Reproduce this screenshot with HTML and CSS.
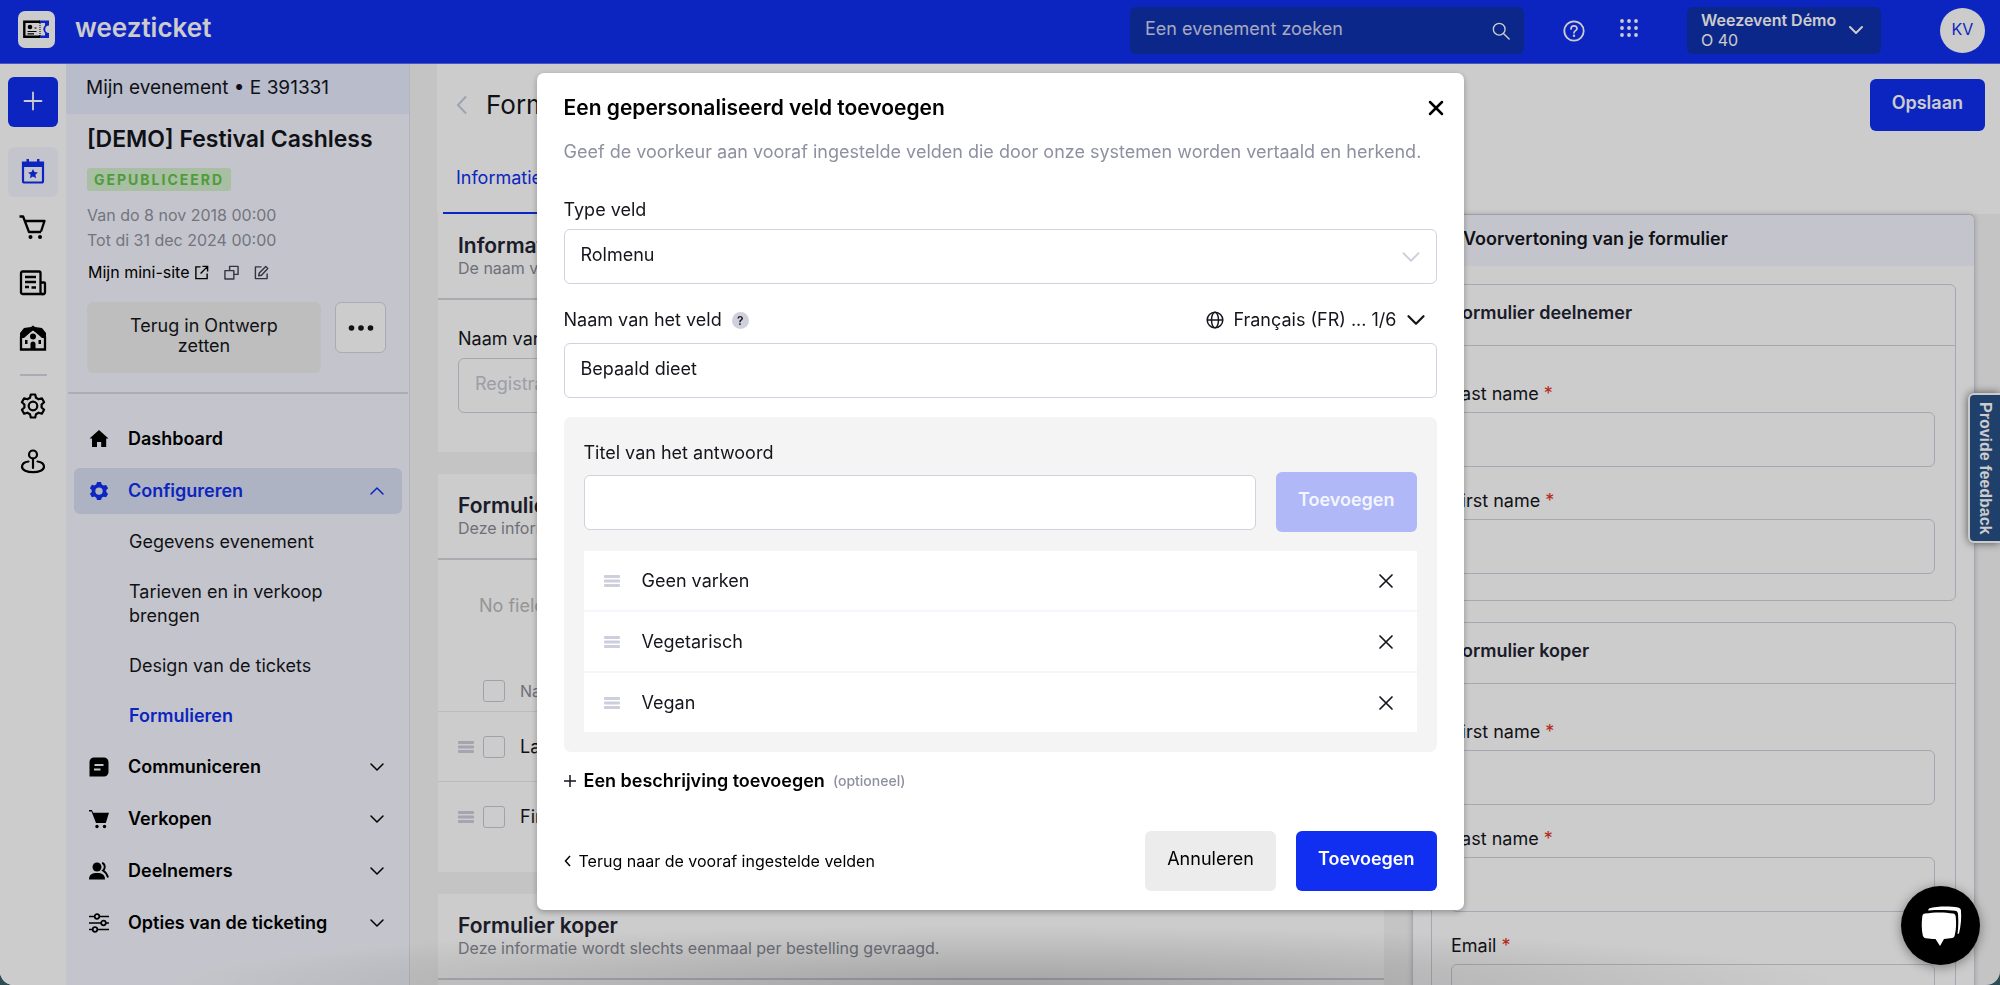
FILE: index.html
```html
<!DOCTYPE html>
<html lang="nl">
<head>
<meta charset="utf-8">
<title>Weezticket – Formulieren</title>
<link rel="stylesheet" href="styles.css">
</head>
<body>
<svg class="sprite" aria-hidden="true">
  <symbol id="i-chevron" viewBox="0 0 16 16"><path d="M2 5l6 6 6-6" fill="none" stroke="currentColor" stroke-linecap="round" stroke-linejoin="round"/></symbol>
  <symbol id="i-drag" viewBox="0 0 16 12"><path d="M1 1.500h14M1 6h14M1 10.500h14" stroke="currentColor" stroke-width="2.800" stroke-linecap="round"/></symbol>
  <symbol id="i-cross" viewBox="0 0 16 16"><path d="M2 2l12 12M14 2L2 14" stroke="currentColor" stroke-linecap="round"/></symbol>
</svg>

<div class="app">
  <header class="topbar">
    <a class="brand" href="#">
      <svg class="brand-mark" viewBox="0 0 37 37"><rect width="37" height="37" rx="7" fill="#fff"/><path d="M21 9.500h10v5a3.600 3.600 0 0 0 0 7.500v5H21z" fill="#112ff0"/><path d="M21 12h6v2.500a5 5 0 0 0 0 7.500v2.500h-6z" fill="#fff"/><path d="M22 10.700H6.300v15.100H22" fill="none" stroke="#000" stroke-width="2.400"/><path d="M22 12v13" stroke="#000" stroke-dasharray="1 1"/><circle cx="12" cy="16" r="2.300"/><path d="M9.500 20.500h9M9.500 22.800h6.500M16.500 17h2" stroke="#000" stroke-width="1.200"/></svg>
      <span class="brand-name">weezticket</span>
    </a>
    <label class="search">
      <input type="search" placeholder="Een evenement zoeken" aria-label="Een evenement zoeken">
      <svg class="search-icon" viewBox="0 0 20 20"><circle cx="8" cy="8" r="6.500" fill="none" stroke="currentColor" stroke-width="1.500"/><path d="M13 13l6 6" stroke="currentColor" stroke-width="1.600" stroke-linecap="round"/></svg>
    </label>
    <button class="bare help" aria-label="Help"><svg viewBox="0 0 22 22"><circle cx="11" cy="11" r="9.700" fill="none" stroke="currentColor" stroke-width="1.800"/><path d="M8 9c0-4 6-4 6-.5 0 2-3 2.300-3 4.300" fill="none" stroke="currentColor" stroke-width="1.700" stroke-linecap="round"/><circle cx="11" cy="15.800" r="1.200" fill="currentColor"/></svg></button>
    <button class="bare apps" aria-label="Apps"><svg viewBox="0 0 18 18" fill="currentColor"><circle cx="2" cy="2" r="1.900"/><circle cx="9" cy="2" r="1.900"/><circle cx="16" cy="2" r="1.900"/><circle cx="2" cy="9" r="1.900"/><circle cx="9" cy="9" r="1.900"/><circle cx="16" cy="9" r="1.900"/><circle cx="2" cy="16" r="1.900"/><circle cx="9" cy="16" r="1.900"/><circle cx="16" cy="16" r="1.900"/></svg></button>
    <button class="org"><span class="org-text"><b>Weezevent Démo</b><span>O 40</span></span><svg class="chev"><use href="#i-chevron"/></svg></button>
    <button class="avatar">KV</button>
  </header>

  <div class="body">
    <nav class="rail" aria-label="Hoofdmenu">
      <a class="rail-item rail-add" href="#" aria-label="Toevoegen"><svg viewBox="0 0 28 28"><path d="M14 5.500v17M5.500 14h17" stroke="currentColor" stroke-width="1.800" stroke-linecap="round"/></svg></a>
      <a class="rail-item rail-current" href="#" aria-label="Evenementen"><svg viewBox="0 0 28 28"><path d="M4 5.500h20V24a1.500 1.500 0 0 1-1.500 1.500h-17A1.500 1.500 0 0 1 4 24z" fill="none" stroke="currentColor" stroke-width="2.200"/><path d="M4 5h20v5H4zM7.500 2h2.500v4H7.500zM18 2h2.500v4H18z" fill="currentColor"/><path d="M14 12l1.500 3.100 3.400.4-2.500 2.300.7 3.400-3.100-1.700-3.100 1.700.7-3.400-2.500-2.300 3.400-.4z" fill="currentColor"/></svg></a>
      <a class="rail-item" href="#" aria-label="Verkoop"><svg viewBox="0 0 28 28" fill="none" stroke="currentColor" stroke-width="2.300"><path d="M.5 3.500h3.600L10 19h12M6 8h19.500L22 18.500" stroke-linejoin="round"/><circle cx="11.500" cy="24" r="2" fill="currentColor" stroke="none"/><circle cx="21" cy="24" r="2" fill="currentColor" stroke="none"/></svg></a>
      <a class="rail-item" href="#" aria-label="Nieuws"><svg viewBox="0 0 28 28" fill="none" stroke="currentColor" stroke-width="2.300"><path d="M24 25H3.500a1.500 1.500 0 0 1-1.500-1.500V4a1.500 1.500 0 0 1 1.500-1.500H20A1.500 1.500 0 0 1 21.500 4v19M21.500 13.500H25a1 1 0 0 1 1 1V23a2 2 0 0 1-4.500 0"/><path d="M6 8h11M6 13h11M6 18h4M12.500 18.500h4.500" stroke-width="2.500"/></svg></a>
      <a class="rail-item" href="#" aria-label="Locatie"><svg viewBox="0 0 28 28"><path d="M2 12v12.500h24V12L14 4z" fill="none" stroke="currentColor" stroke-width="2.300"/><path d="M1 13V8l4-5 7-1 2-1.500L16 2l7 1 4 5v5h-4l-9-8-9 8z" fill="currentColor"/><circle cx="14" cy="11.500" r="3" fill="currentColor"/><path d="M11.500 25v-6a2.500 2.500 0 0 1 5 0v6zM6 15h2.500v4H6zM19.500 15H22v4h-2.500z" fill="currentColor"/></svg></a>
      <hr class="rail-line">
      <a class="rail-item" href="#" aria-label="Instellingen"><svg viewBox="0 0 28 28" fill="none" stroke="currentColor" stroke-width="2.200" stroke-linejoin="round"><path d="M11.800 2.500h4.400l.8 3.300 2.600 1.500 3.300-1 2.200 3.900-2.500 2.300v3l2.500 2.300-2.200 3.900-3.300-1-2.600 1.500-.8 3.300h-4.400l-.8-3.300-2.600-1.500-3.300 1-2.200-3.900 2.500-2.300v-3l-2.500-2.300 2.200-3.900 3.300 1L11 5.800z"/><circle cx="14" cy="14" r="4.300"/></svg></a>
      <a class="rail-item" href="#" aria-label="Toegang"><svg viewBox="0 0 28 28" fill="none" stroke="currentColor" stroke-width="2.200"><circle cx="14" cy="6.500" r="4"/><path d="M14 10.500V20" stroke-linecap="round"/><path d="M9.500 13.500C5.500 14 3 16 3 18.800c0 3.200 5 5.400 11 5.400s11-2.200 11-5.400c0-2.800-2.500-4.800-6.500-5.300" stroke-linecap="round"/></svg></a>
    </nav>

    <aside class="sidebar">
      <p class="event-ref">Mijn evenement • E 391331</p>
      <section class="event">
        <h2>[DEMO] Festival Cashless</h2>
        <span class="badge">GEPUBLICEERD</span>
        <p class="dates">Van do 8 nov 2018 00:00<br>Tot di 31 dec 2024 00:00</p>
        <div class="minisite">
          <a href="#">Mijn mini-site <svg viewBox="0 0 16 16" fill="none" stroke="currentColor" stroke-width="1.500"><path d="M7 2H2v12.500h12V9M9 1.500h5.500V7M14 2L7 9"/></svg></a>
          <button class="bare" aria-label="Kopiëren"><svg viewBox="0 0 16 16" fill="none" stroke="currentColor" stroke-width="1.500" stroke-linejoin="round"><path d="M6 6V1.500h9V10h-4.500M1 6h9.500v9H1z"/></svg></button>
          <button class="bare" aria-label="Bewerken"><svg viewBox="0 0 16 16" fill="none" stroke="currentColor" stroke-width="1.500" stroke-linejoin="round"><path d="M8 2H1.500v12.500H14V9M5 11.500l.6-3L12.500 1.500l2.200 2.200L8 11z"/></svg></button>
        </div>
        <div class="event-actions">
          <button class="btn-draft">Terug in Ontwerp zetten</button>
          <button class="btn-more" aria-label="Meer"><svg viewBox="0 0 26 6" fill="currentColor"><circle cx="3.500" cy="3" r="2.800"/><circle cx="13" cy="3" r="2.800"/><circle cx="22.500" cy="3" r="2.800"/></svg></button>
        </div>
      </section>
      <ul class="menu">
        <li><a class="menu-item" href="#"><svg class="menu-icon" viewBox="0 0 20 20"><path d="M10 1l9.500 8.500h-2.300V18h-5v-5H8v5H3V9.500H.5z" fill="currentColor"/></svg><span>Dashboard</span></a></li>
        <li><button class="menu-item is-open"><svg class="menu-icon" viewBox="0 0 20 20"><path d="M8 1h4l.7 2.400 1.900 1.100 2.500-.6 2 3.400-1.800 1.800v2l1.800 1.800-2 3.400-2.500-.6-1.900 1.100L12 19H8l-.7-2.300-1.900-1.100-2.500.6-2-3.400 1.800-1.800V9L.9 7.200l2-3.400 2.500.6 1.900-1.100zM10 6.400a3.700 3.700 0 1 0 0 7.400 3.700 3.700 0 0 0 0-7.400z" fill="currentColor" fill-rule="evenodd"/></svg><span>Configureren</span><svg class="chev flip"><use href="#i-chevron"/></svg></button>
          <ul class="submenu">
            <li><a href="#">Gegevens evenement</a></li>
            <li><a href="#">Tarieven en in verkoop brengen</a></li>
            <li><a href="#">Design van de tickets</a></li>
            <li><a class="current" href="#">Formulieren</a></li>
          </ul></li>
        <li><button class="menu-item"><svg class="menu-icon" viewBox="0 0 20 20"><path d="M5 .500h10A4.500 4.500 0 0 1 19.500 5v10a4.500 4.500 0 0 1-4.500 4.500H.5V5A4.500 4.500 0 0 1 5 .500zM5.500 7v2h9V7zM5 11.500v2h6.500v-2z" fill="currentColor" fill-rule="evenodd"/></svg><span>Communiceren</span><svg class="chev"><use href="#i-chevron"/></svg></button></li>
        <li><button class="menu-item"><svg class="menu-icon" viewBox="0 0 20 20"><path d="M0 1h2.800l1.400 2.800H20L16.800 14H7L2.500 2.500H0z" fill="currentColor"/><circle cx="8" cy="17.500" r="1.700"/><circle cx="15.500" cy="17.500" r="1.700"/></svg><span>Verkopen</span><svg class="chev"><use href="#i-chevron"/></svg></button></li>
        <li><button class="menu-item"><svg class="menu-icon" viewBox="0 0 20 20"><circle cx="8" cy="6" r="4.500" fill="currentColor"/><path d="M0 18.500c0-5 3-6.500 8-6.500s8 1.500 8 6.500z" fill="currentColor"/><path d="M13 2c3 .5 3.800 5.500 1 7.500 2.500 1.500 4 3.500 5 7" fill="none" stroke="currentColor" stroke-width="1.900"/></svg><span>Deelnemers</span><svg class="chev"><use href="#i-chevron"/></svg></button></li>
        <li><button class="menu-item"><svg class="menu-icon" viewBox="0 0 20 20" fill="none" stroke="currentColor" stroke-width="1.700"><path d="M0 3.500h5.500M10.500 3.500H20M0 10h12M17 10h3M0 16.500h3.500M8.500 16.500H20"/><circle cx="8" cy="3.500" r="2.300"/><circle cx="14.500" cy="10" r="2.300"/><circle cx="6" cy="16.500" r="2.300"/></svg><span>Opties van de ticketing</span><svg class="chev"><use href="#i-chevron"/></svg></button></li>
      </ul>
    </aside>

    <main class="main">
      <div class="page-head">
        <div class="page-title">
          <a class="back" href="#" aria-label="Terug"><svg viewBox="0 0 12 20"><path d="M10 1.500L2 10l8 8.500" fill="none" stroke="currentColor" stroke-width="2"/></svg></a>
          <h1>Formulieren</h1>
          <button class="btn btn-primary btn-save">Opslaan</button>
        </div>
        <div class="tabs"><a href="#">Informatie</a></div>
      </div>
      <div class="columns">
        <div class="cards">
          <section class="card">
            <header><h3>Informatie</h3><p>De naam van je formulier.</p></header>
            <div class="card-form">
              <label for="form-name">Naam van het formulier</label>
              <input id="form-name" type="text" placeholder="Registratie">
            </div>
          </section>
          <section class="card">
            <header><h3>Formulier deelnemer</h3><p>Deze informatie wordt per deelnemer gevraagd.</p></header>
            <p class="empty">No fields</p>
            <div class="field-row field-head"><span></span><input type="checkbox" id="c-all"><label for="c-all">Naam</label></div>
            <div class="field-row"><svg class="drag"><use href="#i-drag"/></svg><input type="checkbox" id="c-last"><label for="c-last">Last name</label></div>
            <div class="field-row field-last"><svg class="drag"><use href="#i-drag"/></svg><input type="checkbox" id="c-first"><label for="c-first">First name</label></div>
          </section>
          <section class="card">
            <header><h3>Formulier koper</h3><p>Deze informatie wordt slechts eenmaal per bestelling gevraagd.</p></header>
            <p class="empty"></p>
          </section>
        </div>
        <aside class="preview">
          <h3>Voorvertoning van je formulier</h3>
          <div class="preview-body">
            <section class="box">
              <h4>Formulier deelnemer</h4>
              <div class="box-form">
                <label for="p1">Last name <em>*</em></label><input id="p1" type="text">
                <label for="p2">First name <em>*</em></label><input id="p2" type="text">
              </div>
            </section>
            <section class="box">
              <h4>Formulier koper</h4>
              <div class="box-form">
                <label for="p3">First name <em>*</em></label><input id="p3" type="text">
                <label for="p4">Last name <em>*</em></label><input id="p4" type="text">
                <label for="p5">Email <em>*</em></label><input id="p5" type="email">
              </div>
            </section>
          </div>
        </aside>
      </div>
    </main>
  </div>
  <button class="feedback">Provide feedback</button>
</div>

<div class="overlay">
  <form class="modal" role="dialog" aria-labelledby="modal-title">
    <header class="modal-head">
      <h2 id="modal-title">Een gepersonaliseerd veld toevoegen</h2>
      <button type="button" class="bare close" aria-label="Sluiten"><svg><use href="#i-cross"/></svg></button>
    </header>
    <p class="lead">Geef de voorkeur aan vooraf ingestelde velden die door onze systemen worden vertaald en herkend.</p>

    <label class="lbl" for="type">Type veld</label>
    <div class="select">
      <select id="type"><option>Rolmenu</option></select>
      <svg class="select-chev"><use href="#i-chevron"/></svg>
    </div>

    <div class="name-row">
      <label class="lbl" for="name">Naam van het veld</label>
      <span class="hint">?</span>
      <button type="button" class="bare lang"><svg class="globe" viewBox="0 0 18 18" fill="none" stroke="currentColor" stroke-width="1.500"><circle cx="9" cy="9" r="7.800"/><ellipse cx="9" cy="9" rx="3.500" ry="7.800"/><path d="M1.500 9h15"/></svg>Français (FR) ... 1/6<svg class="lang-chev"><use href="#i-chevron"/></svg></button>
    </div>
    <input class="field" id="name" type="text" value="Bepaald dieet">

    <section class="answers">
      <label class="lbl" for="answer">Titel van het antwoord</label>
      <div class="answer-add">
        <input class="field" id="answer" type="text">
        <button type="button" class="btn btn-primary" disabled>Toevoegen</button>
      </div>
      <ul class="answer-list">
        <li><svg class="drag"><use href="#i-drag"/></svg><span>Geen varken</span><button type="button" class="bare" aria-label="Verwijderen"><svg><use href="#i-cross"/></svg></button></li>
        <li><svg class="drag"><use href="#i-drag"/></svg><span>Vegetarisch</span><button type="button" class="bare" aria-label="Verwijderen"><svg><use href="#i-cross"/></svg></button></li>
        <li><svg class="drag"><use href="#i-drag"/></svg><span>Vegan</span><button type="button" class="bare" aria-label="Verwijderen"><svg><use href="#i-cross"/></svg></button></li>
      </ul>
    </section>

    <button type="button" class="bare describe"><svg viewBox="0 0 12 12"><path d="M6 0v12M0 6h12" stroke="currentColor" stroke-width="1.500"/></svg><b>Een beschrijving toevoegen</b><small>(optioneel)</small></button>

    <footer class="modal-foot">
      <a href="#"><svg viewBox="0 0 7 12"><path d="M6 1L1.500 6 6 11" fill="none" stroke="currentColor" stroke-width="1.500"/></svg>Terug naar de vooraf ingestelde velden</a>
      <button type="button" class="btn btn-grey">Annuleren</button>
      <button type="submit" class="btn btn-primary">Toevoegen</button>
    </footer>
  </form>
</div>

<button class="chat" aria-label="Chat"><svg viewBox="0 0 42 42" fill="#fff"><path d="M9 3.500C17 1 30 1 38 2.500c2 .4 3 1.500 3 3.500.5 7 0 14-2 22.500l-1.500.5C38.500 22 38.500 15 38 9c-.2-2-1-3-3-3.200C27 4.800 17 5 8 5.500z"/><path d="M5 8.500c9-1.500 20-1.500 28 0 1.700.3 2.500 1.300 2.700 3 .7 6.500.5 13-1 19-.4 1.500-1.200 2.200-2.700 2.500-2.500.5-5 .8-8 1L20 41l-4.500-7c-3.500-.1-6.500-.3-9.500-.8-1.800-.3-2.800-1-3.200-2.700C1.500 24.500 1.500 17.500 2.300 11.500 2.500 9.800 3.300 8.800 5 8.500z"/></svg></button>
</body>
</html>
```

FILE: styles.css
```css
* { box-sizing: border-box; }
html { background: #2f4c55; }
body { margin: 0; font-family: Inter, "Liberation Sans", sans-serif; font-size: 18px; line-height: 24px; color: #15161c; }
h1, h2, h3, h4, p, ul { margin: 0; padding: 0; font-weight: 400; }
ul { list-style: none; }
a { color: inherit; text-decoration: none; }
button, input, select { font: inherit; color: inherit; }
button { cursor: pointer; }
svg { display: block; flex: none; }
.sprite { position: absolute; width: 0; height: 0; }
.bare { background: none; border: 0; padding: 0; }

.app { position: relative; display: flex; flex-direction: column; height: 100vh; overflow: hidden; background: #f5f5f5; border-radius: 0 0 14px 14px; }

.topbar { display: flex; align-items: flex-start; flex: none; height: 64px; padding: 7px 15px 0 18px; background: #112ff0; border-bottom: 1px solid #5a6df0; color: #fff; }
.brand { display: flex; gap: 20px; margin-right: auto; padding-top: 4px; }
.brand-mark { width: 37px; height: 37px; }
.brand-name { padding-top: 1px; font-size: 26px; line-height: 32px; font-weight: 600; }
.search { display: flex; align-items: center; width: 394px; height: 47px; padding: 0 14px 0 15px; background: #1031ad; border-radius: 6px; }
.search input { flex: 1; min-width: 0; padding: 0 0 4px; background: none; border: 0; outline: 0; color: #d0d5f0; }
.search input::placeholder { color: #d0d5f0; opacity: 1; }
.search-icon { width: 18px; height: 18px; }
.help { margin: 13px 0 0 39px; }
.help svg { width: 22px; height: 22px; color: #fff; }
.apps { margin: 12px 0 0 35px; }
.apps svg { width: 18px; height: 18px; color: #fff; }
.org { display: flex; align-items: center; justify-content: space-between; width: 194px; height: 47px; margin-left: 49px; padding: 0 17px 2px 14px; background: #1031ad; border: 0; border-radius: 6px; text-align: left; font-size: 16px; line-height: 20px; color: #fff; }
.org-text { display: grid; white-space: nowrap; }
.org b { font-weight: 600; }
.avatar { width: 45px; height: 45px; margin: 1px 0 0 59px; padding: 0 0 3px; border: 0; border-radius: 50%; background: #fff; color: #112ff0; font-size: 16px; }
.chev { width: 16px; height: 16px; stroke-width: 2; }
.menu .chev { stroke-width: 1.500; }
.flip { transform: scaleY(-1); }

.body { display: flex; flex: 1; min-height: 0; }

.rail { display: flex; flex-direction: column; align-items: center; gap: 6px; width: 66px; flex: none; padding-top: 13px; background: #fff; }
.rail-item { display: grid; place-items: center; width: 50px; height: 50px; padding-bottom: 2px; border-radius: 6px; color: #000; }
.rail-item svg { width: 28px; height: 28px; }
.rail-add { margin-bottom: 14px; background: #112ff0; color: #fff; }
.rail-current { background: #f6f7ff; color: #112ff0; }
.rail-line { width: 27px; margin: 3px 0 0; border: 0; border-top: 2px solid #d5d6e0; }

.sidebar { width: 344px; flex: none; background: #f6f7ff; border-right: 1px solid #dfe1ea; }
.event-ref { height: 50px; padding: 12px 20px; background: #e6ebfe; font-size: 19px; white-space: nowrap; }
.event { display: flex; flex-direction: column; align-items: flex-start; margin: 0 1px 0 2px; padding: 11px 19px 19px; border-bottom: 2px solid #d8dae4; }
.event h2 { font-size: 23px; line-height: 28px; font-weight: 600; white-space: nowrap; }
.badge { margin-top: 15px; padding: 0 7px; border-radius: 3px; background: #d2efcc; color: #63c449; font-size: 14px; line-height: 23px; font-weight: 700; letter-spacing: 2px; }
.dates { margin-top: 12px; font-size: 16px; line-height: 25px; color: #9092a0; }
.minisite { display: flex; align-items: center; gap: 15px; margin-top: 7px; padding-left: 1px; font-size: 16px; color: #404250; }
.minisite a { display: flex; align-items: center; gap: 5px; color: #000; }
.minisite svg { width: 15px; height: 15px; }
.event-actions { display: flex; align-items: flex-start; gap: 14px; margin-top: 18px; }
.btn-draft { width: 234px; height: 71px; padding: 0 30px 3px; border: 0; border-radius: 6px; background: #eee; line-height: 20px; }
.btn-more { display: grid; place-items: center; width: 51px; height: 51px; padding: 0; background: #fff; border: 1px solid #d5d6e0; border-radius: 6px; }
.btn-more svg { width: 26px; height: 6px; }

.menu { display: grid; gap: 6px; padding: 22px 7px 0 8px; }
.menu-item { display: flex; align-items: center; width: 100%; height: 46px; padding: 0 17px 0 15px; background: none; border: 0; border-radius: 6px; text-align: left; font-weight: 600; color: #000; }
.menu-item > span { flex: 1; white-space: nowrap; }
.menu-icon { width: 20px; height: 20px; margin-right: 19px; }
.menu-item.is-open { background: #d9e0f4; color: #112ff0; }
.submenu { display: grid; gap: 26px; padding: 16px 60px 10px 55px; }
.submenu a { display: block; }
.submenu .current { color: #112ff0; font-weight: 600; }

.main { display: flex; flex-direction: column; flex: 1; min-width: 0; }
.page-head { flex: none; height: 150px; margin-left: 27px; background: #fff; }
.page-title { display: flex; align-items: center; height: 82px; padding: 0 15px 0 19px; }
.back svg { width: 12px; height: 20px; color: #c9cce0; }
h1 { flex: 1; padding-left: 18px; font-size: 26px; }
.btn { height: 60px; padding: 0 22px 4px; border: 0; border-radius: 6px; background: #ececec; color: #000; white-space: nowrap; }
.btn-primary { background: #112ff0; color: #fff; font-weight: 600; }
.btn-primary:disabled { background: #b0b8f8; color: #f4f5ff; }
.btn-save { height: 52px; }
.tabs { padding: 0 6px; color: #112ff0; }
.tabs a { display: block; width: 320px; height: 68px; padding: 20px 13px 0; border-bottom: 2px solid #112ff0; }
.columns { display: grid; grid-template-columns: 1.68fr 1fr; gap: 28px; flex: 1; min-height: 0; padding: 0 25px 0 28px; }
.cards { display: flex; flex-direction: column; gap: 22px; }
.card { flex: none; background: #fff; }
.card header { height: 86px; padding: 19px 20px 0; border-bottom: 2px solid #d5d6de; }
.card h3 { font-size: 21px; line-height: 25px; font-weight: 600; color: #222433; }
.card header p { font-size: 16px; line-height: 20px; color: #8a8c98; }
.card-form { display: grid; gap: 7px; padding: 27px 20px 39px; }
.card-form input, .box-form input, .field, select { width: 100%; height: 55px; padding: 0 16px 4px; background: #fff; border: 1px solid #d0d2de; border-radius: 6px; outline: 0; }
.card-form input::placeholder { color: #c4c6d4; }
.empty { height: 109px; padding: 34px 41px; color: #bbb; }
.field-row { display: grid; grid-template-columns: 25px 22px 1fr; align-items: center; height: 70px; padding: 0 20px; border-bottom: 1px solid #e6eaf2; }
.field-row label { padding-left: 15px; }
.field-row input { appearance: none; width: 22px; height: 22px; margin: 0; border: 1px solid #c8cad8; border-radius: 3px; background: #fff; }
.field-head { height: 43px; padding-top: 10px; padding-bottom: 8px; color: #8a8c98; font-size: 16px; }
.field-last { height: 90px; padding-bottom: 20px; border-bottom: 0; }
.drag { width: 16px; height: 12px; color: #cdcfdc; }

.preview { border: 1px solid #d0d2de; border-top-color: #c4c6d2; border-bottom: 0; border-radius: 6px 6px 0 0; background: #fff; box-shadow: 0 0 5px rgba(60, 62, 90, .25); }
.preview h3 { height: 51px; padding: 12px 50px; background: #f6f7ff; border-radius: 6px 6px 0 0; font-size: 18px; font-weight: 600; white-space: nowrap; }
.preview-body { display: grid; gap: 21px; padding: 18px 18px 0; }
.box { border: 1px solid #d0d2de; border-radius: 6px; }
.box h4 { height: 61px; padding: 16px 20px; border-bottom: 1px solid #d0d2de; font-size: 18px; font-weight: 600; color: #222433; }
.box-form { display: grid; padding: 36px 20px 26px 19px; }
.box-form input { margin: 6px 0 22px; }
.box-form input:last-child { margin-bottom: 0; }
.box-form em { color: #e5321f; font-style: normal; }

.feedback { position: absolute; right: 0; top: 393px; height: 150px; padding: 0 6px; writing-mode: vertical-rl; border: 2px solid #fff; border-right: 0; border-radius: 6px 0 0 6px; background: #275085; color: #fff; font: bold 16px/18px "Liberation Sans", sans-serif; box-shadow: 0 0 8px rgba(0, 0, 0, .6); }

.overlay { position: fixed; inset: 0; display: flex; justify-content: center; align-items: flex-start; padding-top: 73px; border-radius: 0 0 14px 14px; background: radial-gradient(ellipse 42% 60px at 50% 100%, rgba(0, 0, 0, .2), transparent), rgba(0, 0, 0, .2); }
.modal { width: 927px; max-width: 94%; padding: 23px 27px 19px; background: #fff; border-radius: 7px; box-shadow: 0 2px 6px rgba(0, 0, 0, .3); }
.modal-head { display: flex; align-items: center; justify-content: space-between; margin-right: -7px; }
.modal-head h2 { font-size: 21px; font-weight: 600; color: #000; }
.close svg { width: 16px; height: 16px; stroke-width: 2.500; color: #000; }
.lead { margin: 20px 0 34px; color: #8e90a0; }
.lbl { display: block; }
.select { display: grid; align-items: center; margin-top: 7px; }
select { appearance: none; grid-area: 1 / 1; }
.select-chev { grid-area: 1 / 1; justify-self: end; width: 20px; height: 20px; margin-right: 16px; stroke-width: 1.500; color: #cdcfdc; pointer-events: none; }
.name-row { display: flex; align-items: center; margin: 24px 0 11px; }
.hint { width: 17px; height: 17px; margin-left: 10px; border-radius: 50%; background: #cfd0dc; text-align: center; font-size: 12px; line-height: 17px; font-weight: 600; }
.lang { display: flex; align-items: center; gap: 9px; margin-left: auto; padding-right: 11px; }
.globe { width: 18px; height: 18px; }
.lang-chev { width: 20px; height: 20px; stroke-width: 1.800; }
.answers { margin-top: 19px; padding: 24px 20px 20px; background: #f4f4f4; border-radius: 7px; }
.answer-add { display: flex; align-items: center; gap: 20px; margin: 7px 0 19px; }
.answer-list { background: #fff; }
.answer-list li { display: flex; align-items: center; height: 61px; padding: 0 23px 0 20px; border-bottom: 2px solid #f3f6fa; }
.answer-list li:last-child { height: 59px; border-bottom: 0; }
.answer-list span { flex: 1; padding-left: 22px; }
.answer-list button svg { width: 16px; height: 16px; stroke-width: 1.700; }
.describe { display: flex; align-items: center; gap: 8px; margin-top: 17px; }
.describe svg { width: 12px; height: 12px; }
.describe b { font-weight: 600; color: #000; }
.describe small { font-size: 14px; font-weight: 500; color: #8e90a0; }
.modal-foot { display: flex; align-items: center; gap: 20px; margin-top: 38px; }
.modal-foot a { display: flex; align-items: center; gap: 8px; margin-right: auto; font-size: 16px; color: #000; }
.modal-foot a svg { width: 7px; height: 12px; }

.chat { position: fixed; right: 20px; bottom: 20px; display: grid; place-items: center; width: 79px; height: 79px; padding: 0; border: 0; border-radius: 50%; background: #000; box-shadow: 0 2px 12px rgba(0, 0, 0, .4); }
.chat svg { width: 42px; height: 42px; }
```
